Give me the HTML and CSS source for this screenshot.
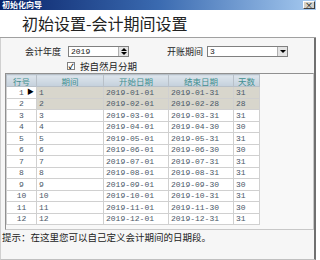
FILE: index.html
```html
<!DOCTYPE html>
<html lang="zh">
<head>
    <meta charset="UTF-8" />
    <title>初始化向导</title>
    <link rel="stylesheet" href="styles.css">
</head>
<body>
<div class="window">
    <div class="titlebar">
        <span class="title">初始化向导</span>
        <span class="close">×</span>
    </div>

    <div class="banner">
        <h1>初始设置-会计期间设置</h1>
    </div>

    <div class="content">
        <div class="form-row">
            <span class="label">会计年度</span>
            <div class="spin">
                <span class="value">2019</span>
                <span class="spin-btn"><i class="up"></i><i class="down"></i></span>
            </div>
            <span class="label label-right">开账期间</span>
            <div class="combo">
                <span class="value">3</span>
                <span class="drop"><i class="down"></i></span>
            </div>
        </div>

        <div class="check-row">
            <span class="checkbox">✓</span>
            <span>按自然月分期</span>
        </div>

        <div class="grid">
            <table>
                <thead>
                    <tr>
                        <th class="c-no">行号</th>
                        <th class="c-period">期间</th>
                        <th class="c-date">开始日期</th>
                        <th class="c-date">结束日期</th>
                        <th class="c-days">天数</th>
                    </tr>
                </thead>
                <tbody id="rows"></tbody>
            </table>
        </div>

        <p class="hint">提示：在这里您可以自己定义会计期间的日期段。</p>
    </div>
</div>

<script>
    const days = [31, 28, 31, 30, 31, 30, 31, 31, 30, 31, 30, 31];
    const body = document.getElementById("rows");
    for (let i = 0; i < 12; i++) {
        let m = String(i + 1).padStart(2, "0");
        let row = document.createElement("tr");
        if (i < 2) row.className = "sel";
        row.innerHTML = `
            <td class="no">${i + 1}${i === 0 ? '<span class="arrow">▶</span>' : ''}</td>
            <td>${i + 1}</td>
            <td>2019-${m}-01</td>
            <td>2019-${m}-${days[i]}</td>
            <td>${days[i]}</td>
        `;
        body.appendChild(row);
    }
</script>
</body>
</html>
```

FILE: styles.css
```css
* { box-sizing: border-box; }

body {
    margin: 0;
    width: 320px;
    height: 260px;
    overflow: hidden;
    background: #fff;
    font-family: "Noto Sans CJK SC", "DejaVu Sans", sans-serif;
    color: #333;
}

.window {
    width: 316px;
    height: 260px;
    display: flex;
    flex-direction: column;
}

.titlebar {
    height: 10px;
    background: linear-gradient(to right, #0a246a, #3a6ab0 50%, #a6caf0);
    display: flex;
    align-items: center;
    justify-content: space-between;
    padding: 0 1px 0 2px;
}

.title {
    color: #fff;
    font-size: 8px;
    font-weight: bold;
    line-height: 10px;
}

.close {
    width: 12px;
    height: 8px;
    background: #d4d0c8;
    border: 1px solid #fff;
    border-right-color: #404040;
    border-bottom-color: #404040;
    font-size: 8px;
    line-height: 6px;
    text-align: center;
    color: #000;
}

.banner {
    height: 28px;
    background: #fff;
    border-bottom: 1px solid #a0a0a0;
}

.banner h1 {
    margin: 0;
    padding-left: 22px;
    font-size: 16px;
    font-weight: normal;
    line-height: 27px;
    color: #222;
}

.content {
    flex: 1;
    background: #f6f6f6;
    border-left: 1px solid #d0d0d0;
    border-right: 2px solid #707070;
    border-bottom: 1px solid #c0c0c0;
}

.form-row {
    display: flex;
    align-items: center;
    margin-top: 8px;
    height: 11px;
}

.label {
    font-size: 9px;
    line-height: 11px;
    margin-left: 24px;
    width: 43px;
    color: #222;
}

.label-right {
    margin-left: 38px;
    width: 40px;
}

.spin, .combo {
    height: 11px;
    background: #fff;
    border: 1px solid #808080;
    display: flex;
    align-items: stretch;
    justify-content: space-between;
}

.spin { width: 61px; }
.combo { width: 81px; }

.value {
    font-family: "Liberation Mono", monospace;
    font-size: 8px;
    line-height: 9px;
    padding-left: 2px;
    color: #222;
}

.spin-btn, .drop {
    width: 10px;
    background: #e4e4e4;
    border-left: 1px solid #b0b0b0;
    display: flex;
    flex-direction: column;
    align-items: center;
    justify-content: center;
    gap: 1px;
}

.up, .down {
    width: 0;
    height: 0;
    border-left: 3px solid transparent;
    border-right: 3px solid transparent;
}

.up { border-bottom: 3px solid #000; }
.down { border-top: 3px solid #000; }

.check-row {
    display: flex;
    align-items: center;
    gap: 5px;
    margin: 3px 0 0 66px;
    font-size: 9.5px;
    line-height: 12px;
    color: #222;
}

.checkbox {
    width: 8px;
    height: 8px;
    border: 1px solid #808080;
    background: #fff;
    font-size: 7px;
    line-height: 6px;
    text-align: center;
    color: #000;
    font-weight: bold;
}

.grid {
    margin: 1px 0 0 4px;
    width: 309px;
    height: 157px;
    border-top: 1px solid #909090;
    border-left: 1px solid #909090;
    border-right: 1px solid #c8c8c8;
    border-bottom: 1px solid #c8c8c8;
    background: #f8f8f8;
}

table {
    border-collapse: collapse;
    table-layout: fixed;
    width: 253px;
    font-family: "Liberation Mono", "Noto Sans CJK SC", monospace;
    font-size: 8px;
    color: #4a5868;
}

th {
    height: 12px;
    background: linear-gradient(#dde5ec, #c4d0dc);
    border: 1px solid #b8c0c8;
    font-family: "Noto Sans CJK SC", sans-serif;
    font-weight: normal;
    font-size: 8.5px;
    line-height: 10px;
    color: #3f8f8f;
    padding: 0;
}

.c-no { width: 30px; }
.c-period { width: 67px; }
.c-date { width: 65px; }
.c-days { width: 26px; }

td {
    height: 11.5px;
    border: 1px solid #d0d0d0;
    background: #fff;
    padding: 0 0 0 2px;
    line-height: 9px;
    white-space: nowrap;
}

td.no {
    text-align: center;
    position: relative;
    padding: 0;
}

.arrow {
    position: absolute;
    right: 2px;
    top: 1px;
    font-size: 7px;
    color: #000;
}

tr.sel td { background: #d8d6cc; }
tr.sel td.no { background: #fff; }

.hint {
    margin: 2px 0 0 1px;
    font-size: 9.5px;
    line-height: 11px;
    color: #222;
}
```
